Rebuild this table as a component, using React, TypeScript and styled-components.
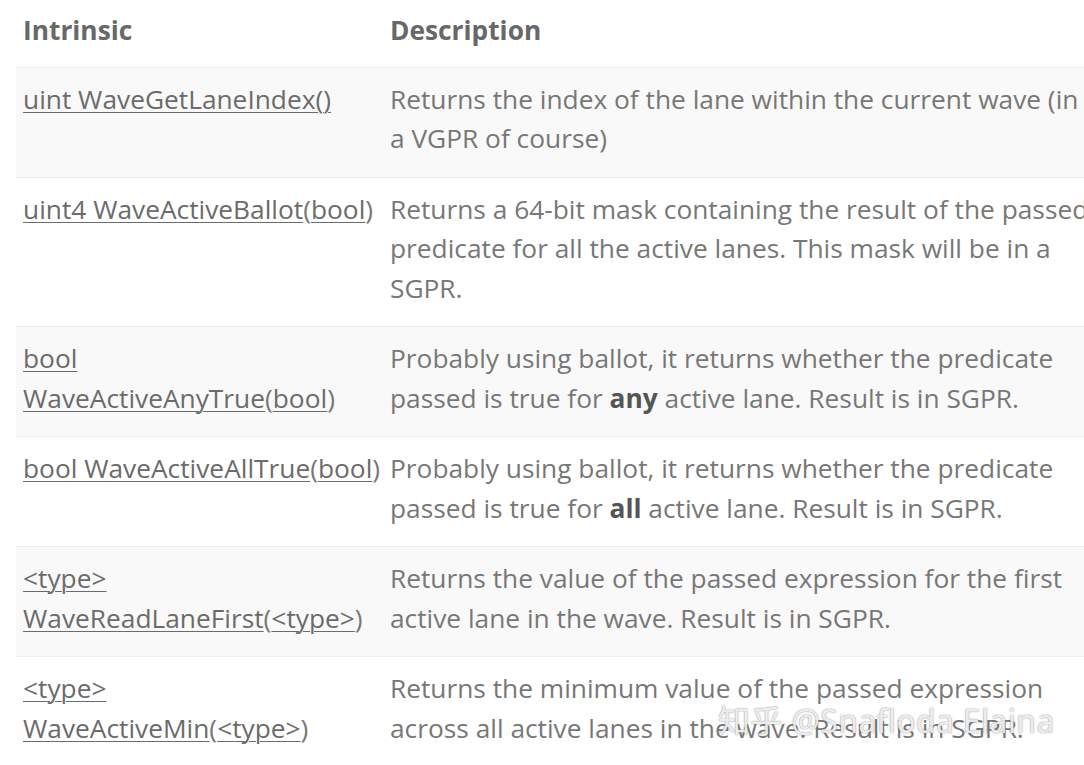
import React from 'react';
import styled, { createGlobalStyle } from 'styled-components';

const GlobalStyle = createGlobalStyle`
	html, body {
		margin: 0;
		padding: 0;
		background: #fff;
		overflow: hidden;
	}
	body {
		font-family: 'Open Sans', 'Noto Sans', sans-serif;
	}
`;

const Page = styled.div`
	position: relative;
	width: 1084px;
	height: 765px;
	overflow: hidden;
	padding-left: 16px;
	box-sizing: border-box;
`;

const Table = styled.div`
	width: 1140px;
	display: flex;
	flex-direction: column;
`;

const Row = styled.div<{ $shaded?: boolean; $head?: boolean }>`
	display: grid;
	grid-template-columns: 367px 1fr;
	background: ${(p) => (p.$shaded ? '#f9f9f9' : '#fff')};
	border-top: ${(p) => (p.$head ? 'none' : '1px solid #ececec')};
	padding: ${(p) => (p.$head ? '11px 0 16px' : '12px 0 18px')};
	font-size: 26.3px;
	line-height: 39.5px;
	color: #777;
`;

const HeadCell = styled.div`
	padding-left: 7px;
	font-weight: 700;
	color: #686868;
`;

const Cell = styled.div`
	padding-left: 7px;
	white-space: nowrap;
`;

const Link = styled.span`
	color: #6b6b6b;
	text-decoration: underline;
	text-underline-offset: 3px;
	text-decoration-thickness: 1px;
`;

const Strong = styled.b`
	color: #555;
`;

const Watermark = styled.div`
	position: absolute;
	left: 718px;
	top: 696px;
	font-family: 'Noto Sans', 'Noto Sans CJK SC', sans-serif;
	font-size: 32px;
	letter-spacing: 0.3px;
	color: rgba(255, 255, 255, 0.85);
	text-shadow: 0 0 1px rgba(90, 90, 90, 0.6), 0 0 2px rgba(90, 90, 90, 0.35);
	white-space: nowrap;
	pointer-events: none;
`;

type Entry = {
	intrinsic: React.ReactNode;
	description: React.ReactNode;
};

const rows: Entry[] = [
	{
		intrinsic: <Link>uint WaveGetLaneIndex()</Link>,
		description: (
			<>
				Returns the index of the lane within the current wave (in
				<br />a VGPR of course)
			</>
		),
	},
	{
		intrinsic: (
			<>
				<Link>uint4 WaveActiveBallot</Link>(<Link>bool</Link>)
			</>
		),
		description: (
			<>
				Returns a 64-bit mask containing the result of the passed
				<br />
				predicate for all the active lanes. This mask will be in a
				<br />
				SGPR.
			</>
		),
	},
	{
		intrinsic: (
			<>
				<Link>bool</Link>
				<br />
				<Link>WaveActiveAnyTrue</Link>(<Link>bool</Link>)
			</>
		),
		description: (
			<>
				Probably using ballot, it returns whether the predicate
				<br />
				passed is true for <Strong>any</Strong> active lane. Result is in SGPR.
			</>
		),
	},
	{
		intrinsic: (
			<>
				<Link>bool WaveActiveAllTrue</Link>(<Link>bool</Link>)
			</>
		),
		description: (
			<>
				Probably using ballot, it returns whether the predicate
				<br />
				passed is true for <Strong>all</Strong> active lane. Result is in SGPR.
			</>
		),
	},
	{
		intrinsic: (
			<>
				<Link>&lt;type&gt;</Link>
				<br />
				<Link>WaveReadLaneFirst</Link>(<Link>&lt;type&gt;</Link>)
			</>
		),
		description: (
			<>
				Returns the value of the passed expression for the first
				<br />
				active lane in the wave. Result is in SGPR.
			</>
		),
	},
	{
		intrinsic: (
			<>
				<Link>&lt;type&gt;</Link>
				<br />
				<Link>WaveActiveMin</Link>(<Link>&lt;type&gt;</Link>)
			</>
		),
		description: (
			<>
				Returns the minimum value of the passed expression
				<br />
				across all active lanes in the wave. Result is in SGPR.
			</>
		),
	},
];

const App = () => {
	return (
		<>
			<GlobalStyle />
			<Page>
				<Table>
					<Row $head>
						<HeadCell>Intrinsic</HeadCell>
						<HeadCell>Description</HeadCell>
					</Row>
					{rows.map((r, i) => (
						<Row key={i} $shaded={i % 2 === 0}>
							<Cell>{r.intrinsic}</Cell>
							<Cell>{r.description}</Cell>
						</Row>
					))}
				</Table>
				<Watermark>知乎 @Snafloda Elaina</Watermark>
			</Page>
		</>
	);
};

export default App;
